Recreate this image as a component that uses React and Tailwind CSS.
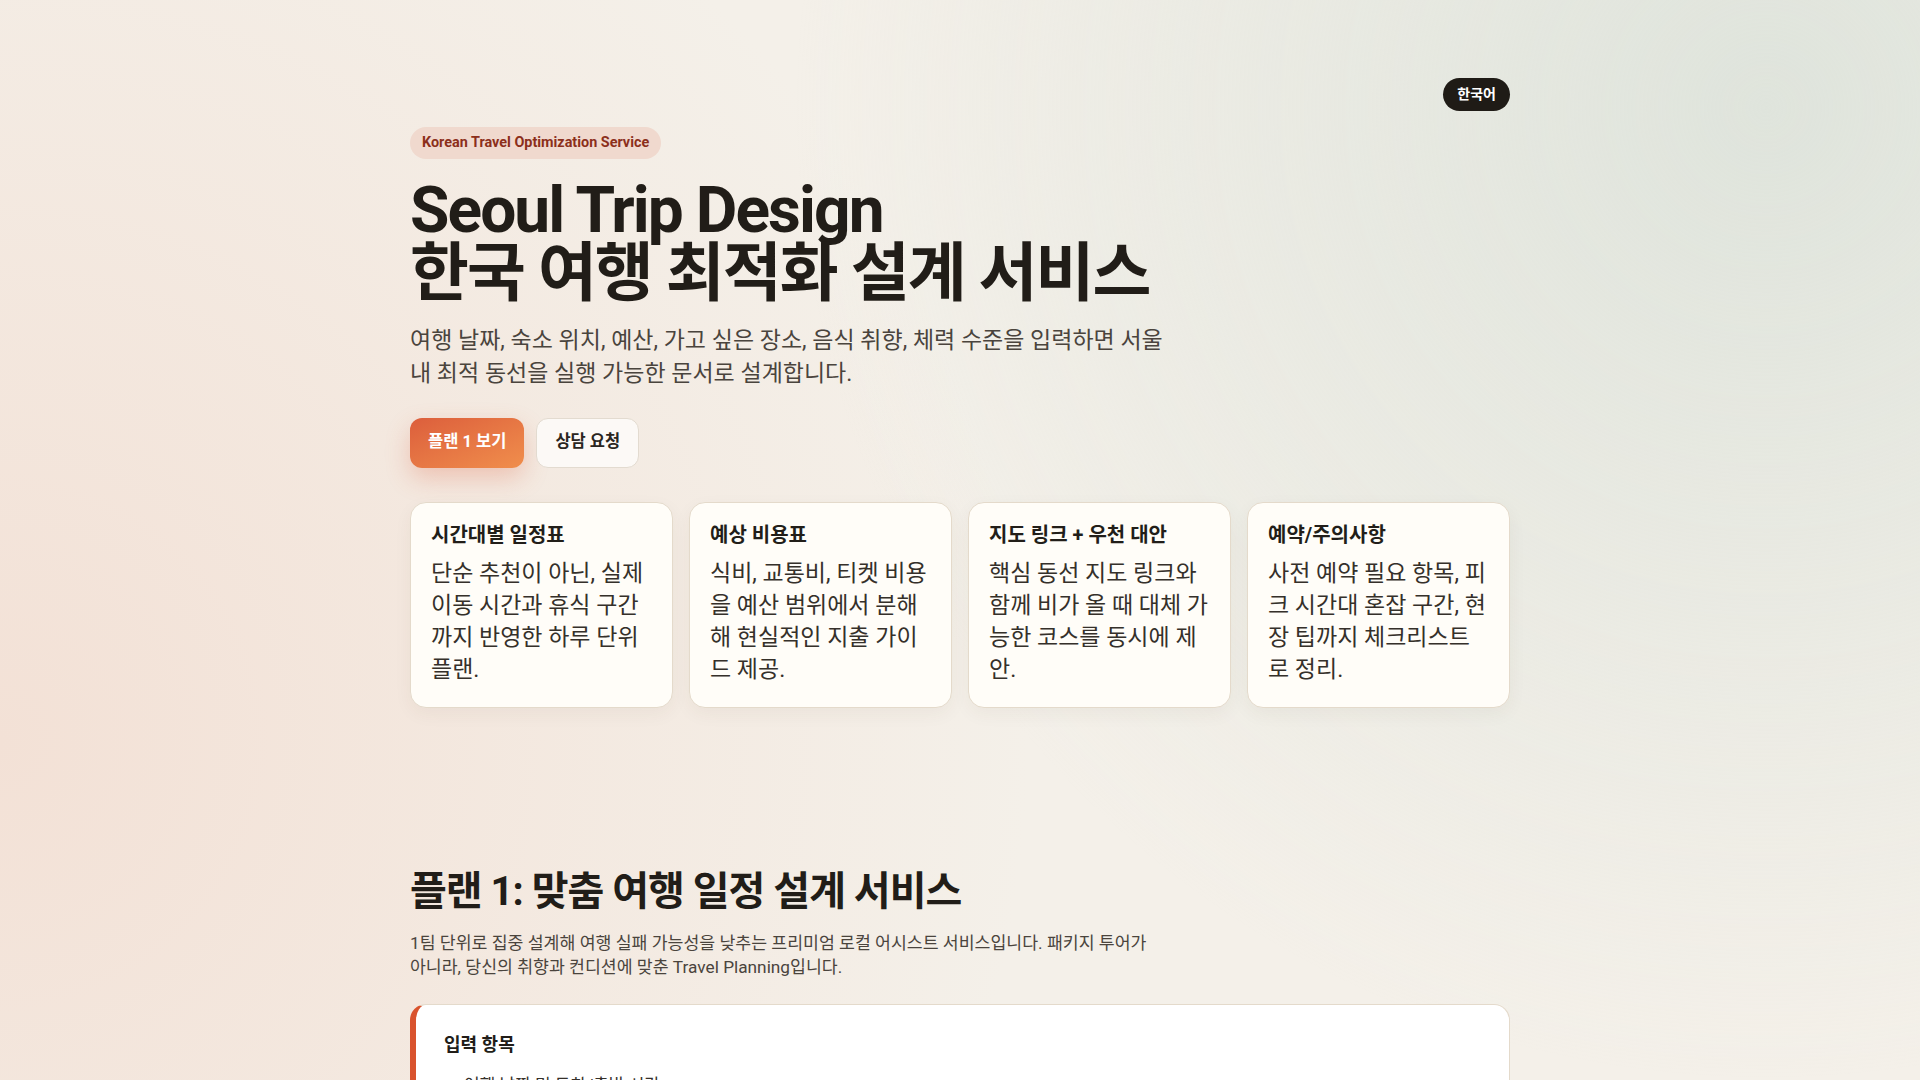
import React from "react"

const features = [
  { title: "시간대별 일정표", body: "단순 추천이 아닌, 실제 이동 시간과 휴식 구간까지 반영한 하루 단위 플랜." },
  { title: "예상 비용표", body: "식비, 교통비, 티켓 비용을 예산 범위에서 분해해 현실적인 지출 가이드 제공." },
  { title: "지도 링크 + 우천 대안", body: "핵심 동선 지도 링크와 함께 비가 올 때 대체 가능한 코스를 동시에 제안." },
  { title: "예약/주의사항", body: "사전 예약 필요 항목, 피크 시간대 혼잡 구간, 현장 팁까지 체크리스트로 정리." },
]

const inputs = [
  "여행 날짜 및 도착/출발 시간",
  "숙소 위치 (호텔명 또는 지역)",
  "1인 기준 예산 범위",
  "꼭 가고 싶은 장소와 음식 취향",
  "체력 수준 및 동행 인원",
]

function App() {
  return (
    <div className="min-h-screen w-full bg-[#f4f0e9] bg-[radial-gradient(circle_at_92%_8%,#dfe4dc_0%,transparent_45%),radial-gradient(circle_at_0%_55%,#f3e1d6_0%,transparent_50%)] font-['Roboto','Noto_Sans_CJK_KR',sans-serif] text-[#211d18]">
      <div className="mx-auto max-w-[1100px]">
        <header className="flex justify-end pt-[78px]">
          <button className="h-[33px] rounded-full bg-[#1f1b16] px-[14px] text-[14px] font-bold text-white">한국어</button>
        </header>

        <section className="pb-20">
          <span className="mt-4 inline-flex h-8 items-center rounded-full bg-[#f0d9ce] px-3 text-[14.4px] font-bold text-[#8c2f1b]">
            Korean Travel Optimization Service
          </span>
          <h1 className="mt-[21px] text-[64px] font-bold leading-[0.98] tracking-[-0.03em] text-[#211d18]">
            Seoul Trip Design
            <br />
            한국 여행 최적화 설계 서비스
          </h1>
          <p className="mt-5 max-w-[770px] text-[23px] leading-[1.4] text-[#4a443d]">
            여행 날짜, 숙소 위치, 예산, 가고 싶은 장소, 음식 취향, 체력 수준을 입력하면 서울 내 최적 동선을 실행 가능한 문서로 설계합니다.
          </p>
          <div className="mt-[28px] flex gap-3">
            <button className="h-[50px] rounded-xl bg-gradient-to-br from-[#dc5e3c] to-[#f08e4c] px-[18px] text-[16.5px] font-bold text-white shadow-[0_10px_24px_rgba(220,95,61,0.28)]">
              플랜 1 보기
            </button>
            <button className="h-[50px] rounded-xl border border-[#e3dbd0] bg-[#fcf9f6] px-[18px] text-[16.5px] font-bold text-[#2a2520]">
              상담 요청
            </button>
          </div>
          <div className="mt-[34px] grid grid-cols-4 gap-4">
            {features.map((f) => (
              <div key={f.title} className="rounded-2xl border border-[#e4dacb] bg-[#fffdf8] px-5 pb-5 pt-[17px] shadow-[0_6px_18px_rgba(80,60,40,0.05)]">
                <h3 className="text-[20px] font-bold leading-[1.5] text-[#221e19]">{f.title}</h3>
                <p className="mt-2 text-[23px] leading-[1.4] text-[#35302a]">{f.body}</p>
              </div>
            ))}
          </div>
        </section>

        <section className="pt-[80px] pb-20">
          <h2 className="text-[40px] font-bold leading-[1.2] tracking-tight text-[#211d18]">플랜 1: 맞춤 여행 일정 설계 서비스</h2>
          <p className="mt-[15px] max-w-[756px] text-[17.25px] leading-[1.42] text-[#4a443d]">
            1팀 단위로 집중 설계해 여행 실패 가능성을 낮추는 프리미엄 로컬 어시스트 서비스입니다. 패키지 투어가 아니라, 당신의 취향과 컨디션에 맞춘 Travel Planning입니다.
          </p>
          <div className="mt-6 rounded-2xl border border-[#e4dacb] border-l-[6px] border-l-[#d9532d] bg-white px-7 pb-7 pt-[26px]">
            <h3 className="text-[18px] font-bold leading-[1.5] text-[#211d18]">입력 항목</h3>
            <ul className="mt-[14px] list-disc space-y-2 pl-5 text-[17px] leading-[1.6] text-[#35302a]">
              {inputs.map((i) => (
                <li key={i}>{i}</li>
              ))}
            </ul>
          </div>
        </section>
      </div>
    </div>
  )
}

export default App
